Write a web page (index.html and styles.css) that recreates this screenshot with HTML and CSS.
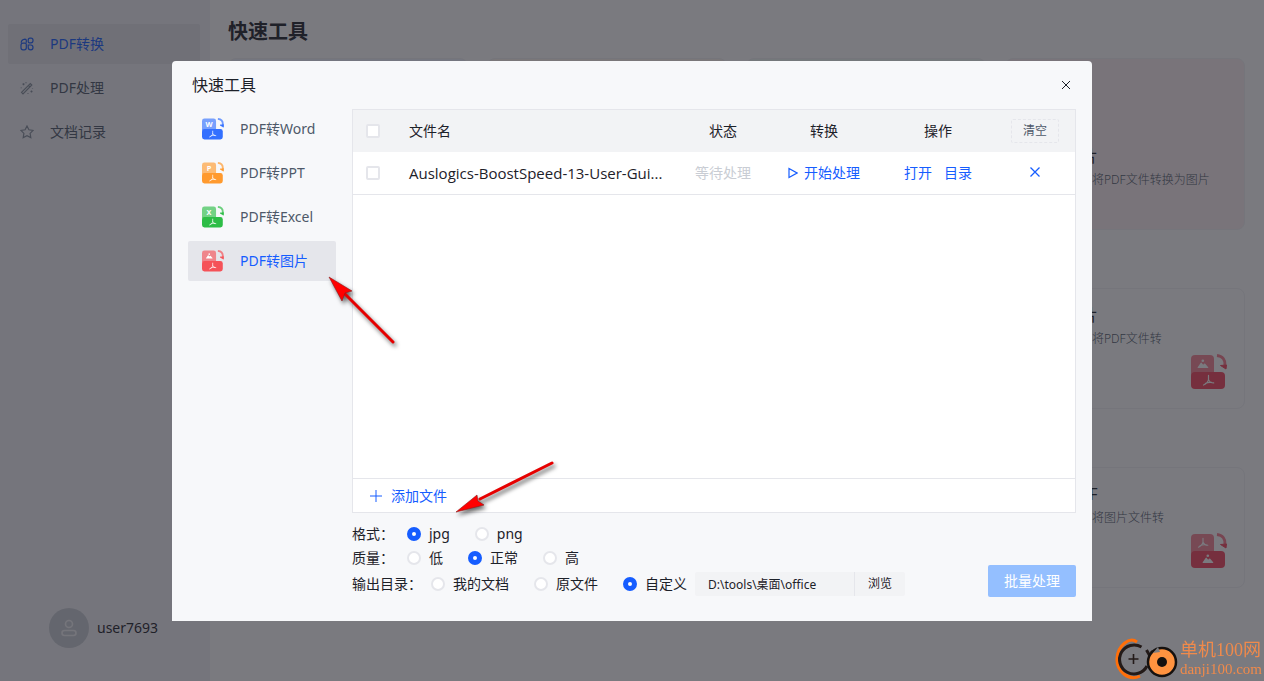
FILE: index.html
```html
<!DOCTYPE html>
<html lang="zh-CN">
<head>
<meta charset="utf-8">
<meta name="viewport" content="width=device-width, initial-scale=1">
<title>快速工具</title>
<link rel="stylesheet" href="styles.css">
</head>
<body>
<svg class="sprite" aria-hidden="true">
  <symbol id="i-acrobat" viewBox="0 0 12 12">
    <path d="M6 1.200v3.600c0 2-2.200 4.600-4.600 5.400M6 5.200c.8 2 2.600 3 4.800 3M3 8.800c2-1 4-1.200 5.800-1" fill="none" stroke="#fff" stroke-width="1.100" stroke-linecap="round"/>
  </symbol>
  <symbol id="i-photo" viewBox="0 0 12 12">
    <path d="M1 10q-.8 0-.3-.8L3.600 5q.6-.8 1.200 0l1.400 1.800.8-1q.6-.7 1.200 0l3 3.400q.5.800-.4.800z" fill="#fff"/><circle cx="5.800" cy="2.800" r="1.300" fill="#fff"/>
  </symbol>
  <symbol id="i-convert" viewBox="0 0 36 36">
    <rect x="0" y="1" width="23" height="22" rx="4" fill="currentColor" opacity=".65"/>
    <rect x="0" y="18" width="34" height="17" rx="4" fill="currentColor"/>
    <path d="M26 1.500c5.500.5 8.500 4.500 8 10" fill="none" stroke="currentColor" stroke-width="3" opacity=".7"/>
    <path d="M29.500 11.500l6-.5-.5 4z" fill="currentColor" stroke="currentColor" stroke-linejoin="round"/>
  </symbol>
</svg>

<div class="app">
  <aside class="sidebar">
    <nav class="menu">
      <a class="menu-item active" href="#convert">
        <svg class="menu-icon" viewBox="0 0 14 14"><path d="M6.300 5.800V3.400q0-1.200-1.300-1.200-3.600.3-3.800 3.600M3 6.200h2q1.300 0 1.300 1.300v3.300q0 2-2 2H3q-2 0-2-2V8.200q0-2 2-2zM10 1.200h1q2 0 2 2v.6q0 2-2 2H9.500q-1.300 0-1.300-1.300V3.200q0-2 1.800-2zM8.200 8h2.600q2.200 0 2.200 2.400t-2.200 2.400q-2.600 0-2.600-2.600z"/></svg>
        <span>PDF转换</span>
      </a>
      <a class="menu-item" href="#process">
        <svg class="menu-icon" viewBox="0 0 14 14"><path d="M1.500 11.300 10.300 2.500l1.500 1.500L3 12.800zM8.400 4.300l1.500 1.500M2.500 3.200h2M3.500 2.200v2M10.500 10.500h2M11.500 9.500v2M6 1.200v1M12.500 7v.6M8 12v.8M1.200 6.500v.8"/></svg>
        <span>PDF处理</span>
      </a>
      <a class="menu-item" href="#records">
        <svg class="menu-icon" viewBox="0 0 14 14"><path d="M7 1l1.900 3.800 4.200.6-3 3 .7 4.200L7 10.700l-3.800 1.900.7-4.200-3-3 4.200-.6z"/></svg>
        <span>文档记录</span>
      </a>
    </nav>
    <div class="account">
      <span class="avatar"><svg viewBox="0 0 18 18"><circle cx="9" cy="5" r="3.500"/><rect x="2" y="11.500" width="14" height="5" rx="2.500"/></svg></span>
      <span>user7693</span>
    </div>
  </aside>
  <main class="main">
    <h1 class="page-title">快速工具</h1>
    <section class="cards cards-large">
      <div class="card blue"></div>
      <div class="card orange"></div>
      <div class="card green"></div>
      <div class="card red">
        <h2 class="card-title">PDF转图片</h2>
        <p class="card-text">将PDF文件转换为图片</p>
      </div>
    </section>
    <section class="cards">
      <div class="card last">
        <h2 class="card-title">PDF转图片</h2>
        <p class="card-text">将PDF文件转换为图片</p>
        <svg class="card-icon" viewBox="0 0 36 36"><use href="#i-convert"/><use href="#i-photo" x="6" y="4" width="12" height="12"/><use href="#i-acrobat" x="11" y="20" width="13" height="13"/></svg>
      </div>
    </section>
    <section class="cards">
      <div class="card last">
        <h2 class="card-title">图片转PDF</h2>
        <p class="card-text">将图片文件转换为PDF</p>
        <svg class="card-icon" viewBox="0 0 36 36"><use href="#i-convert"/><use href="#i-acrobat" x="6" y="4" width="12" height="12"/><use href="#i-photo" x="11" y="20" width="12" height="12"/></svg>
      </div>
    </section>
  </main>
</div>

<div class="mask">
  <div class="dialog" role="dialog" aria-labelledby="dialog-title">
    <header class="dialog-head">
      <h2 class="dialog-title" id="dialog-title">快速工具</h2>
      <button class="close" type="button" aria-label="关闭"><svg viewBox="0 0 10 10"><path d="M1 1l8 8M9 1L1 9"/></svg></button>
    </header>
    <div class="dialog-body">
      <nav class="tools">
        <a class="tool" href="#word"><svg class="tool-icon c-blue" viewBox="0 0 36 36"><use href="#i-convert"/><text class="mark" x="11.500" y="14">W</text><use href="#i-acrobat" x="11" y="20" width="13" height="13"/></svg><span>PDF转Word</span></a>
        <a class="tool" href="#ppt"><svg class="tool-icon c-orange" viewBox="0 0 36 36"><use href="#i-convert"/><text class="mark" x="11.500" y="14">P</text><use href="#i-acrobat" x="11" y="20" width="13" height="13"/></svg><span>PDF转PPT</span></a>
        <a class="tool" href="#excel"><svg class="tool-icon c-green" viewBox="0 0 36 36"><use href="#i-convert"/><text class="mark" x="11.500" y="14">X</text><use href="#i-acrobat" x="11" y="20" width="13" height="13"/></svg><span>PDF转Excel</span></a>
        <a class="tool active" href="#image"><svg class="tool-icon c-red" viewBox="0 0 36 36"><use href="#i-convert"/><use href="#i-photo" x="6" y="4" width="12" height="12"/><use href="#i-acrobat" x="11" y="20" width="13" height="13"/></svg><span>PDF转图片</span></a>
      </nav>
      <div class="work">
        <div class="panel">
          <table class="files">
            <colgroup><col class="col-check"><col><col class="col-state"><col class="col-run"><col class="col-run"><col class="col-clear"></colgroup>
            <thead>
              <tr>
                <th><input class="check" type="checkbox" aria-label="全选"></th>
                <th class="name">文件名</th>
                <th>状态</th>
                <th>转换</th>
                <th>操作</th>
                <th><button class="clear" type="button">清空</button></th>
              </tr>
            </thead>
            <tbody>
              <tr>
                <td><input class="check" type="checkbox" aria-label="选择文件"></td>
                <td class="name">Auslogics-BoostSpeed-13-User-Gui...</td>
                <td class="waiting">等待处理</td>
                <td><button class="link" type="button"><svg class="play" viewBox="0 0 10 12"><path d="M1 1.500v9L9 6z"/></svg>开始处理</button></td>
                <td><span class="actions"><a class="link" href="#open">打开</a><a class="link" href="#folder">目录</a></span></td>
                <td><button class="link remove" type="button" aria-label="移除"><svg viewBox="0 0 10 10"><path d="M.5.5l9 9M9.500.5l-9 9"/></svg></button></td>
              </tr>
            </tbody>
          </table>
          <div class="add-bar">
            <button class="link add" type="button"><svg class="plus" viewBox="0 0 12 12"><path d="M6 0v12M0 6h12"/></svg>添加文件</button>
          </div>
        </div>
        <form class="options">
          <div class="fields">
            <div class="field" role="radiogroup" aria-label="格式">
              <span class="field-name">格式：</span>
              <label class="choice"><input type="radio" name="format" checked>jpg</label>
              <label class="choice"><input type="radio" name="format">png</label>
            </div>
            <div class="field" role="radiogroup" aria-label="质量">
              <span class="field-name">质量：</span>
              <label class="choice"><input type="radio" name="quality">低</label>
              <label class="choice"><input type="radio" name="quality" checked>正常</label>
              <label class="choice"><input type="radio" name="quality">高</label>
            </div>
            <div class="field" role="radiogroup" aria-label="输出目录">
              <span class="field-name wide">输出目录：</span>
              <label class="choice"><input type="radio" name="output">我的文档</label>
              <label class="choice"><input type="radio" name="output">原文件</label>
              <label class="choice"><input type="radio" name="output" checked>自定义</label>
              <span class="path"><input class="path-input" type="text" aria-label="自定义目录" value="D:\tools\桌面\office"><button class="browse" type="button">浏览</button></span>
            </div>
          </div>
          <button class="submit" type="button">批量处理</button>
        </form>
      </div>
    </div>
    <svg class="pointers" viewBox="0 0 920 560" aria-hidden="true">
      <g class="pointer"><path class="shaft" d="M172 232l49 49"/><path d="M157 216l23 14-7 2-3 8z"/></g>
      <g class="pointer"><path class="shaft" d="M308 438l72-36"/><path d="M284 451l21-17 1 6 6 4z"/></g>
    </svg>
  </div>
</div>

<div class="brand">
  <svg class="brand-logo" viewBox="0 0 64 44">
    <path d="M22 5C14-1 3 9 2 21c-1 12 11 24 23 18" fill="none" stroke="#ff6f0a" stroke-width="3"/>
    <path d="M26.500 10A14.500 14.500 0 1 0 32 29" fill="none" stroke="#231a18" stroke-width="3"/>
    <path d="M18.500 17v10M13.500 22h10" stroke="#231a18" stroke-width="1.600"/>
    <path d="M31.500 13l4 7M36 14l3 3" stroke="#231a18" stroke-width="3"/>
    <circle cx="47" cy="25" r="14" fill="#ff9340" stroke="#15110f" stroke-width="2.500"/>
    <path d="M38 16l5-6 2 5z" fill="#7a7b7f"/>
    <circle cx="47" cy="25" r="5" fill="#15110f"/>
  </svg>
  <div class="brand-text"><span class="brand-name">单机100网</span><span class="brand-site">danji100.com</span></div>
</div>
</body>
</html>
```
FILE: styles.css
```css
* { box-sizing: border-box; }
body {
  margin: 0;
  overflow: hidden;
  font-family: "Noto Sans", "Noto Sans CJK SC", sans-serif;
  font-size: 14px;
  font-weight: 400;
  line-height: 22px;
  color: #1d2129;
}
h1, h2, p { margin: 0; font-weight: inherit; }
a { text-decoration: none; color: inherit; }
button, input { font: inherit; color: inherit; margin: 0; }
button { border: 0; padding: 0; background: none; cursor: pointer; }
.sprite { position: absolute; width: 0; height: 0; }

.app { display: flex; min-height: 100vh; background: #fff; }
.sidebar {
  display: flex;
  flex-direction: column;
  justify-content: space-between;
  width: 210px;
  padding: 24px 10px 33px 8px;
  background: #f2f3f8;
}
.menu { display: flex; flex-direction: column; gap: 4px; }
.menu-item {
  display: flex;
  align-items: center;
  gap: 16px;
  height: 40px;
  padding: 0 12px;
  border-radius: 2px;
  color: #4e5969;
}
.menu-item.active { background: #e5e6eb; color: #165dff; }
.menu-icon { width: 14px; height: 14px; fill: none; stroke: #86909c; stroke-width: 1.2; }
.menu-item.active .menu-icon { stroke: currentColor; }
.account { display: flex; align-items: center; gap: 8px; padding-left: 41px; }
.avatar {
  display: flex;
  align-items: center;
  justify-content: center;
  width: 40px;
  height: 40px;
  border-radius: 50%;
  background: #c9cdd4;
}
.avatar svg { width: 18px; height: 18px; fill: none; stroke: #f2f3f5; stroke-width: 1.6; }

.main { flex: 1; padding: 16px 19px 0 18px; }
.page-title { height: 42px; font-size: 20px; font-weight: 700; line-height: 32px; }
.cards { display: grid; grid-template-columns: repeat(4, 1fr); gap: 19px; margin-bottom: 58px; }
.card {
  position: relative;
  min-height: 121px;
  padding: 14px;
  border: 1px solid #f2f3f5;
  border-radius: 8px;
}
.cards-large .card { min-height: 172px; padding-top: 85px; }
.card.last { grid-column: 4; }
.card.blue { background: #f0f6ff; }
.card.orange { background: #fff8f0; }
.card.green { background: #f0fbf4; }
.card.red { background: #fdf0f2; }
.card-title { font-size: 16px; line-height: 24px; }
.card-text { width: 200px; font-size: 12px; font-weight: 300; line-height: 24px; text-indent: 6em; color: #4e5969; }
.card.last .card-text { width: 150px; }
.card-icon { position: absolute; right: 17px; bottom: 18px; width: 36px; height: 36px; color: #f5455c; }

.mask {
  position: fixed;
  inset: 0;
  display: flex;
  align-items: center;
  justify-content: center;
  padding-top: 1px;
  background: rgba(33, 34, 41, 0.6);
}
.dialog {
  position: relative;
  display: flex;
  flex-direction: column;
  width: 920px;
  min-height: 560px;
  border-radius: 4px 4px 0 0;
  background: #f7f8fa;
}
.dialog-head {
  display: flex;
  align-items: center;
  justify-content: space-between;
  height: 48px;
  padding: 0 20px;
}
.dialog-title { font-size: 16px; }
.close { display: flex; padding: 1px; }
.close svg { width: 10px; height: 10px; fill: none; stroke: #1d2129; stroke-width: 1; }
.dialog-body { flex: 1; display: flex; gap: 16px; padding: 0 16px 24px; }
.tools { display: flex; flex-direction: column; gap: 4px; width: 148px; }
.tool {
  display: flex;
  align-items: center;
  gap: 16px;
  height: 40px;
  padding: 0 14px;
  border-radius: 2px;
  color: #4e5969;
}
.tool.active { background: #e5e6eb; color: #165dff; }
.tool-icon { width: 22px; height: 22px; }
.mark { fill: #fff; font-size: 12px; font-weight: 700; text-anchor: middle; }
.c-blue { color: #3370ff; }
.c-orange { color: #ff9a2e; }
.c-green { color: #2dbd46; }
.c-red { color: #f55258; }

.work { flex: 1; display: flex; flex-direction: column; }
.panel { flex: 1; display: flex; flex-direction: column; justify-content: space-between; border: 1px solid #e5e6eb; background: #fff; }
.files { width: 100%; border-collapse: collapse; table-layout: fixed; }
.files th, .files td { height: 42px; padding: 0; font-weight: inherit; text-align: center; }
.files thead { background: #f2f3f5; }
.files tbody tr { border-bottom: 1px solid #e5e6eb; }
.files .name { padding-left: 16px; text-align: left; white-space: nowrap; }
.files tbody .name { font-family: "Open Sans", "Noto Sans CJK SC", sans-serif; font-size: 15px; }
.col-check { width: 40px; }
.col-state { width: 88px; }
.col-run { width: 114px; }
.col-clear { width: 80px; }
.check {
  display: block;
  width: 14px;
  height: 14px;
  margin: 0 auto;
  appearance: none;
  border: 2px solid #e5e6eb;
  border-radius: 2px;
  background: #fff;
}
.clear {
  width: 48px;
  height: 24px;
  border: 1px dashed #e5e6eb;
  border-radius: 2px;
  font-size: 12px;
  color: #4e5969;
}
.files .waiting { color: #c9cdd4; }
.link { display: inline-flex; align-items: center; color: #165dff; vertical-align: middle; }
.actions { display: inline-flex; gap: 12px; }
.play { width: 10px; height: 12px; margin-right: 6px; fill: none; stroke: currentColor; stroke-width: 1.2; }
.remove { padding-bottom: 4px; }
.remove svg { width: 10px; height: 10px; fill: none; stroke: currentColor; stroke-width: 1.3; }
.add-bar { display: flex; align-items: center; height: 34px; padding-left: 17px; border-top: 1px solid #e5e6eb; }
.plus { width: 12px; height: 12px; margin-right: 9px; fill: none; stroke: currentColor; stroke-width: 1; }

.options { display: flex; align-items: flex-end; justify-content: space-between; padding-top: 9px; }
.fields { display: flex; flex-direction: column; }
.field { display: flex; align-items: center; height: 24px; }
.field:last-child { margin: 2px 0 1px; }
.field-name { width: 55px; }
.field-name.wide { width: 79px; }
.choice { display: flex; align-items: center; gap: 8px; margin-right: 25px; }
.choice input {
  width: 14px;
  height: 14px;
  appearance: none;
  border: 2px solid #e5e6eb;
  border-radius: 50%;
  background: #fff;
}
.choice input:checked { border: 5px solid #165dff; }
.path { display: flex; margin-left: -17px; font-size: 12px; }
.path-input { width: 160px; height: 24px; padding: 0 13px; border: 0; border-right: 1px solid #e5e6eb; border-radius: 2px 0 0 2px; background: #f2f3f5; }
.browse { width: 50px; height: 24px; border-radius: 0 2px 2px 0; background: #f2f3f5; }
.submit { width: 88px; height: 32px; border-radius: 2px; background: #94bfff; color: #fff; }

.pointers { position: absolute; inset: 0; width: 100%; height: 100%; pointer-events: none; }
.pointer { fill: #f00; stroke: #8c1a1a; stroke-width: 0.6; filter: drop-shadow(2px 3px 2px rgba(0, 0, 0, 0.6)); }
.shaft { stroke: #e60000; stroke-width: 3; stroke-linecap: round; }

.brand { position: fixed; right: 2px; bottom: 0; display: flex; align-items: center; gap: 1px; color: #f08a4b; }
.brand-logo { width: 64px; height: 44px; }
.brand-text { display: flex; flex-direction: column; font-family: "Liberation Serif", "Noto Sans CJK SC", serif; }
.brand-name { font-size: 18px; line-height: 20px; }
.brand-site { font-size: 15px; line-height: 18px; }
```
